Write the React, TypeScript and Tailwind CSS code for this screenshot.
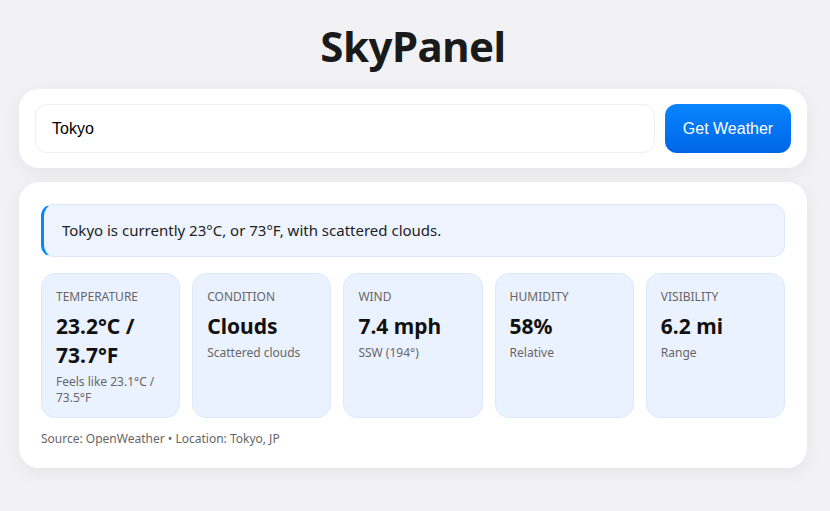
import React, { useState } from 'react';

const STATS = [
  { label: 'Temperature', value: '23.2°C / 73.7°F', sub: 'Feels like 23.1°C / 73.5°F' },
  { label: 'Condition', value: 'Clouds', sub: 'Scattered clouds' },
  { label: 'Wind', value: '7.4 mph', sub: 'SSW (194°)' },
  { label: 'Humidity', value: '58%', sub: 'Relative' },
  { label: 'Visibility', value: '6.2 mi', sub: 'Range' },
];

export default function App() {
  const [city, setCity] = useState('Tokyo');

  return (
    <div
      className="min-h-[511px] bg-[#f2f2f5] text-[#1a1a1a] pt-[18px] pb-10"
      style={{ fontFamily: '"Segoe UI", "Noto Sans", sans-serif' }}
    >
      <div className="w-[788px] ml-[19px]">
        <h1 className="text-center text-[42px] font-bold leading-[56px] tracking-[-0.5px] mb-[15px]">SkyPanel</h1>

        {/* Search */}
        <div className="bg-white rounded-[20px] shadow-[0_4px_18px_rgba(0,0,0,0.06)] px-4 py-[15px] flex gap-[10px]">
          <input
            value={city}
            onChange={(e) => setCity(e.target.value)}
            className="flex-1 h-[49px] rounded-[12px] border border-[#eceef4] px-4 text-[16px] text-black outline-none"
            style={{ fontFamily: '"Liberation Sans", Arial, sans-serif' }}
          />
          <button
            className="w-[126px] h-[49px] rounded-[12px] text-white text-[16px] bg-gradient-to-b from-[#0a84ff] to-[#0066e6]"
            style={{ fontFamily: '"Liberation Sans", Arial, sans-serif' }}
          >
            Get Weather
          </button>
        </div>

        {/* Result */}
        <div className="mt-[14px] bg-white rounded-[20px] shadow-[0_4px_18px_rgba(0,0,0,0.06)] px-[22px] pt-[22px] pb-[20px]">
          <div className="rounded-[12px] bg-[#eef4ff] border border-[#dde8fb] border-l-[3px] border-l-[#0a84ff] h-[53px] flex items-center px-[18px] text-[15px] text-[#222]">
            Tokyo is currently 23°C, or 73°F, with scattered clouds.
          </div>

          <div className="grid grid-cols-5 gap-x-3 mt-4">
            {STATS.map((s) => (
              <div key={s.label} className="h-[145px] rounded-[14px] bg-[#ebf2ff] border border-[#dde8fb] px-[14px] pt-[15px]">
                <div className="text-[12px] uppercase text-[#666] leading-[16px]">{s.label}</div>
                <div className="text-[21px] font-bold leading-[29px] mt-[7px] text-[#111]">{s.value}</div>
                <div className="text-[12px] text-[#666] leading-[16px] mt-[4px]">{s.sub}</div>
              </div>
            ))}
          </div>

          <div className="text-[12px] text-[#666] mt-[12px]">Source: OpenWeather • Location: Tokyo, JP</div>
        </div>
      </div>
    </div>
  );
}
